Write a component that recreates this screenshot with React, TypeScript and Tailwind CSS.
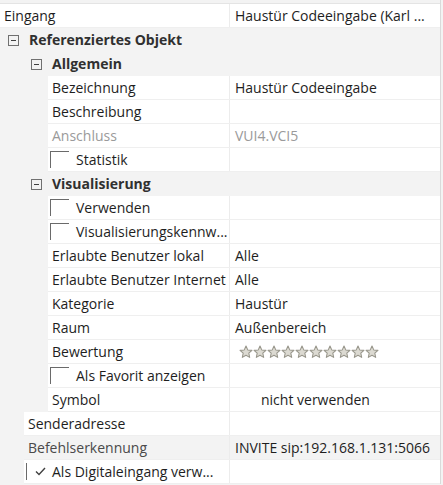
import React from 'react';

type RowProps = {
  level: 0 | 1 | 2;
  label: string;
  value?: React.ReactNode;
  check?: 'off' | 'on';
  muted?: boolean;
  shaded?: boolean;
};

const indentClass = { 0: 'w-0', 1: 'w-6', 2: 'w-12' };

const MinusBox = () => (
  <span className="flex h-[11px] w-[11px] items-center justify-center border border-[#707070]">
    <span className="h-px w-[5px] bg-[#404040]" />
  </span>
);

const Star = () => (
  <svg width="14" height="14" viewBox="0 0 24 24">
    <path
      d="M12 1.8l3 6.6 7.2.8-5.4 4.9 1.5 7.1L12 17.6l-6.3 3.6 1.5-7.1L1.8 9.2l7.2-.8z"
      fill="#dcdad2"
      stroke="#97958a"
      strokeWidth="1.8"
      strokeLinejoin="round"
    />
  </svg>
);

const Category = ({ level, label }: { level: 0 | 1; label: string }) => (
  <div className="flex h-6 items-center bg-[#f3f3f3]">
    <div className={level === 0 ? 'w-2' : 'w-[31px]'} />
    <MinusBox />
    <span className="ml-[10px] font-bold text-[#303030]">{label}</span>
  </div>
);

const Row = ({ level, label, value, check, muted, shaded }: RowProps) => (
  <div className="flex h-6 bg-[#f3f3f3]">
    <div className={indentClass[level]} />
    <div
      className={`flex min-w-0 flex-1 border-b border-[#efefef] ${
        shaded ? 'bg-[#f3f3f3]' : 'bg-white'
      }`}
    >
      <div className="flex h-full flex-1 items-center overflow-hidden whitespace-nowrap border-r border-[#ececec]">
        {check ? (
          <>
            <span
              className={`relative ml-[2px] h-[17px] w-[19px] shrink-0 border-l border-[#6a6a6a] ${
                check === 'off' ? 'border-t' : ''
              }`}
            >
              {check === 'on' && (
                <svg className="absolute left-[8px] top-[4px]" width="11" height="9" viewBox="0 0 11 9">
                  <path d="M1 4.5l3 3L10 1" fill="none" stroke="#404040" strokeWidth="1.4" />
                </svg>
              )}
            </span>
            <span className="ml-[7px] text-[#1e1e1e]">{label}</span>
          </>
        ) : (
          <span className={`ml-1 ${muted ? 'text-[#9a9a9a]' : shaded ? 'text-[#4a4a4a]' : 'text-[#1e1e1e]'}`}>
            {label}
          </span>
        )}
      </div>
      <div className="flex h-full w-[210px] shrink-0 items-center overflow-hidden whitespace-nowrap pl-[5px]">
        {typeof value === 'string' ? (
          <span className={muted ? 'text-[#9a9a9a]' : 'text-[#1e1e1e]'}>{value}</span>
        ) : (
          value
        )}
      </div>
    </div>
  </div>
);

export default function App() {
  return (
    <div
      className="h-[485px] w-[443px] overflow-hidden bg-[#f3f3f3] text-[14px] leading-none"
      style={{ fontFamily: '"Open Sans", "Noto Sans", sans-serif' }}
    >
      <div className="w-[441px] border-r border-[#dadada]">
        <div className="h-[4px] border-b border-[#e4e4e4]" />
        <Row level={0} label="Eingang" value="Haustür Codeeingabe (Karl ..." />
        <Category level={0} label="Referenziertes Objekt" />
        <Category level={1} label="Allgemein" />
        <Row level={2} label="Bezeichnung" value="Haustür Codeeingabe" />
        <Row level={2} label="Beschreibung" value="" />
        <Row level={2} label="Anschluss" value="VUI4.VCI5" muted />
        <Row level={2} label="Statistik" check="off" value="" />
        <Category level={1} label="Visualisierung" />
        <Row level={2} label="Verwenden" check="off" value="" />
        <Row level={2} label="Visualisierungskennw..." check="off" value="" />
        <Row level={2} label="Erlaubte Benutzer lokal" value="Alle" />
        <Row level={2} label="Erlaubte Benutzer Internet" value="Alle" />
        <Row level={2} label="Kategorie" value="Haustür" />
        <Row level={2} label="Raum" value="Außenbereich" />
        <Row
          level={2}
          label="Bewertung"
          value={
            <div className="ml-[4px] flex">
              {Array.from({ length: 10 }).map((_, i) => (
                <Star key={i} />
              ))}
            </div>
          }
        />
        <Row level={2} label="Als Favorit anzeigen" check="off" value="" />
        <Row level={2} label="Symbol" value={<span className="ml-[26px] text-[#1e1e1e]">nicht verwenden</span>} />
        <Row level={1} label="Senderadresse" value="" />
        <Row level={1} label="Befehlserkennung" value="INVITE sip:192.168.1.131:5066" shaded />
        <Row level={1} label="Als Digitaleingang verw..." check="on" value="" />
      </div>
    </div>
  );
}
